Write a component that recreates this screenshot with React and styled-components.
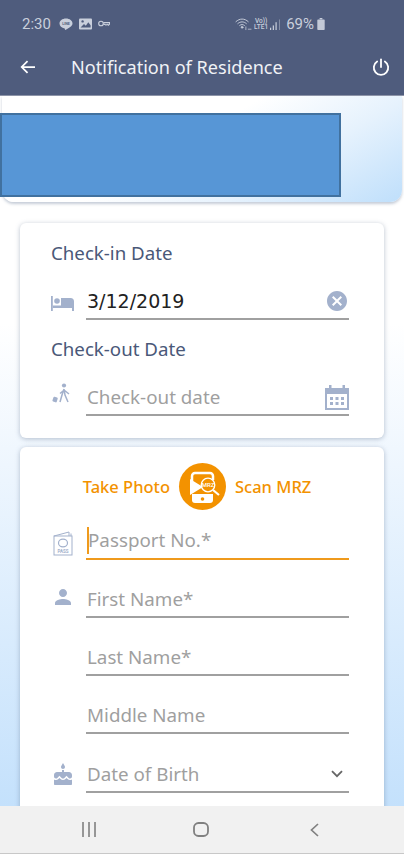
import React from "react";
import styled, { createGlobalStyle } from "styled-components";

const GlobalStyle = createGlobalStyle`
  html, body {
    margin: 0;
    padding: 0;
    background: #fff;
  }
  * {
    box-sizing: border-box;
  }
`;

const Phone = styled.div`
  width: 404px;
  height: 854px;
  display: flex;
  flex-direction: column;
  overflow: hidden;
  font-family: "Noto Sans", sans-serif;
  background: #fff;
`;

const Header = styled.header`
  flex: none;
  height: 96px;
  background: #4f5c7d;
  display: flex;
  flex-direction: column;
  border-bottom: 1px solid #8d94a8;
`;

const StatusBar = styled.div`
  height: 49px;
  display: flex;
  align-items: center;
  padding: 0 79px 1px 22px;
  color: #c9cfdc;
`;

const StatusTime = styled.span`
  font-family: Roboto, sans-serif;
  font-size: 15px;
  margin-right: 8px;
`;

const StatusIcons = styled.div`
  display: flex;
  align-items: center;
  gap: 6px;
`;

const StatusRight = styled.div`
  margin-left: auto;
  display: flex;
  align-items: center;
  gap: 2px;
`;

const Percent = styled.span`
  font-family: Roboto, sans-serif;
  font-size: 15px;
  margin: 0 1px 0 3px;
`;

const VoLte = styled.span`
  display: flex;
  flex-direction: column;
  align-items: center;
  font-family: Roboto, sans-serif;
  font-size: 6.5px;
  line-height: 6.5px;
  font-weight: 500;
`;

const Toolbar = styled.div`
  flex: 1;
  display: flex;
  align-items: center;
  padding: 0 14px 11px 20px;
  color: #fff;
`;

const Title = styled.h1`
  margin: 0 0 0 35px;
  font-size: 18.1px;
  font-weight: 400;
  color: #f0f2f6;
  flex: 1;
`;

const Content = styled.main`
  flex: 1;
  min-height: 0;
  overflow: hidden;
  background: linear-gradient(180deg, #fff 0%, #fff 32%, #eef6fe 52%, #c4e1fc 100%);
  display: flex;
  flex-direction: column;
`;

const Banner = styled.div`
  flex: none;
  position: relative;
  height: 106px;
  margin: 0 2px;
  border-radius: 0 0 12px 12px;
  background: linear-gradient(150deg, #fff 45%, #e6f2fd 70%, #bfdffb 100%);
  box-shadow: 0 2px 3px rgba(90, 110, 140, 0.35);
`;

const Redaction = styled.div`
  position: absolute;
  left: -2px;
  top: 17px;
  width: 341px;
  height: 84px;
  background: #5796d6;
  border: 2px solid #41719f;
`;

const Card = styled.section`
  flex: none;
  margin: ${(p) => p.$top}px 20px 0;
  width: 364px;
  padding: 0 35px 0 31px;
  background: #fff;
  border-radius: 6px;
  box-shadow: 0 1px 5px rgba(80, 100, 130, 0.4);
`;

const DatesCard = styled(Card)`
  height: 215px;
  padding-top: 17px;
`;

const PersonCard = styled(Card)`
  height: 420px;
  padding-top: 16px;
`;

const Label = styled.div`
  height: 26px;
  line-height: 26px;
  font-size: 18.7px;
  color: #4a5878;
`;

const Field = styled.div`
  display: flex;
  align-items: center;
  margin-top: ${(p) => p.$top || 0}px;
  height: ${(p) => p.$height || 38}px;
  & + ${Label} {
    margin-top: 16px;
  }
`;

const IconSlot = styled.div`
  flex: none;
  width: 35px;
  height: 100%;
  display: flex;
  align-items: center;
  color: #a3b1cc;
  padding-top: ${(p) => Math.max(p.$shift || 0, 0) * 2}px;
  padding-bottom: ${(p) => Math.max(-(p.$shift || 0), 0) * 2}px;
`;

const InputLine = styled.div`
  flex: 1;
  height: 100%;
  display: flex;
  align-items: center;
  justify-content: space-between;
  padding: 2px 0 0 1px;
  border-bottom: ${(p) => (p.$focused ? "2px solid #ef9a1c" : "2px solid #a0a0a0")};
  font-size: ${(p) => (p.$filled ? 19 : 18.8)}px;
  color: ${(p) => (p.$filled ? "#222" : "#9f9f9f")};
  font-family: ${(p) => (p.$filled ? '"DejaVu Sans", sans-serif' : '"Noto Sans", sans-serif')};
`;

const Caret = styled.span`
  width: 2px;
  height: 27px;
  background: #ef9a1c;
  margin-right: -1px;
  flex: none;
`;

const InputText = styled.span`
  flex: 1;
  white-space: nowrap;
`;

const ScanRow = styled.div`
  height: 47px;
  display: flex;
  align-items: center;
  justify-content: center;
  gap: 9px;
  margin: 0 1px 0 -5px;
  color: #f39200;
  font-size: 16.5px;
  font-weight: 500;
`;

const ScanButton = styled.div`
  width: 47px;
  height: 47px;
  border-radius: 50%;
  background: #f39200;
  flex: none;
`;

const NavBar = styled.nav`
  flex: none;
  height: 48px;
  background: #f1f1f1;
  border-bottom: 1px solid #c8c8c8;
  display: grid;
  grid-template-columns: 177px 48px 179px;
  align-items: center;
  justify-items: center;
  color: #808080;
`;

const NavSlot = styled.div`
  display: flex;
`;

const LineIcon = () => (
  <svg width="14" height="13" viewBox="0 0 14 13">
    <path fill="currentColor" d="M7 .5C3.3.5.5 2.700.5 5.500c0 2.500 2.200 4.400 5.100 4.900.6.1.3 1.100.3 1.600 0 .5 3.200-1.400 5.300-3 1.500-1.100 2.300-2.200 2.300-3.500C13.500 2.700 10.700.5 7 .5z" />
    <text x="7" y="7" textAnchor="middle" fontSize="3.600" fontWeight="700" fill="#4f5c7d" fontFamily="Roboto, sans-serif">LINE</text>
  </svg>
);

const PictureIcon = () => (
  <svg width="13" height="12" viewBox="0 0 13 12">
    <rect width="13" height="11" y="0.5" rx="1" fill="currentColor" />
    <circle cx="3.600" cy="3.400" r="1.200" fill="#4f5c7d" />
    <path d="M1.500 9.500 5 6l1.800 1.700L9.300 4.200l2.300 3v2.300z" fill="#4f5c7d" />
  </svg>
);

const KeyIcon = () => (
  <svg width="12" height="8" viewBox="0 0 12 8" fill="none" stroke="currentColor" strokeWidth="1.100">
    <circle cx="3" cy="3.500" r="2.300" />
    <path d="M5.400 2.600H11.500V4.300L10.300 5.200 9.200 4.400 8 5.200 6.800 4.400H5.400" />
  </svg>
);

const WifiIcon = () => (
  <svg width="17" height="14" viewBox="0 0 18 14" fill="none" stroke="currentColor" strokeWidth="1" strokeLinecap="round">
    <path d="M1 4.500C5 .8 10 .8 14 4.500" />
    <path d="M3 6.500c2.800-2.400 6.200-2.400 9 0" />
    <path d="M5 8.500c1.600-1.300 3.400-1.300 5 0" />
    <circle cx="7.500" cy="10.500" r=".9" fill="currentColor" />
    <path d="M11.500 10v3M14 12.500h3" strokeWidth=".8" />
  </svg>
);

const SignalIcon = () => (
  <svg width="11" height="13" viewBox="0 0 12 13" fill="currentColor">
    <rect x="0" y="10" width="1.300" height="2.500" />
    <rect x="3" y="7.500" width="1.300" height="5" />
    <rect x="6" y="4" width="1.300" height="8.500" />
    <rect x="10" y="1" width="0.800" height="11.500" opacity=".6" />
  </svg>
);

const BatteryIcon = () => (
  <svg width="8" height="12" viewBox="0 0 8 13" fill="currentColor">
    <rect x="2.500" y="0" width="3" height="1.500" />
    <rect x="0" y="1.500" width="8" height="11.500" rx=".8" opacity=".95" />
  </svg>
);

const BackArrow = () => (
  <svg width="16" height="14" viewBox="0 0 18 16" fill="none" stroke="currentColor" strokeWidth="2">
    <path d="M17 8H2M8.500 1.300 1.800 8l6.700 6.700" />
  </svg>
);

const PowerIcon = () => (
  <svg width="18" height="18" viewBox="0 0 20 20" fill="none" stroke="currentColor" strokeWidth="2" strokeLinecap="round">
    <path d="M10 1.500v8.500" />
    <path d="M5.700 3.900a8 8 0 1 0 8.600 0" />
  </svg>
);

const BedIcon = () => (
  <svg width="23" height="15" viewBox="0 0 23 15" fill="currentColor">
    <rect x="0" y="0" width="1.800" height="15" />
    <circle cx="6" cy="5" r="2.800" />
    <path d="M10 2h9.500a3.500 3.500 0 0 1 3.500 3.500V15h-2v-3H1.800V9.500H10z" />
  </svg>
);

const WalkerIcon = () => (
  <svg width="22" height="22" viewBox="-3 0 22 22" fill="none" stroke="currentColor" strokeWidth="1.500">
    <circle cx="10" cy="2.500" r="2.100" fill="currentColor" stroke="none" />
    <path d="M10 6l-2 6-2 7M10 6l1 6 3 7M10 7l5 4M9 8 6 10.500" />
    <rect x="-1" y="14" width="4.500" height="5" rx="1" transform="rotate(18 1 16)" fill="currentColor" stroke="none" />
  </svg>
);

const CalendarIcon = () => (
  <svg width="24" height="25" viewBox="0 0 24 25" fill="#a3b1cc">
    <rect x="4" y="0" width="2.500" height="5" />
    <rect x="17.500" y="0" width="2.500" height="5" />
    <path fillRule="evenodd" d="M0 3h24v22H0zM2 9v14h20V9z" />
    <g>
      <rect x="5" y="12" width="3" height="3" />
      <rect x="10.500" y="12" width="3" height="3" />
      <rect x="16" y="12" width="3" height="3" />
      <rect x="5" y="17" width="3" height="3" />
      <rect x="10.500" y="17" width="3" height="3" />
      <rect x="16" y="17" width="3" height="3" />
    </g>
  </svg>
);

const ClearIcon = () => (
  <svg width="24" height="20" viewBox="0 2 22 20" fill="#a3b1cc" preserveAspectRatio="xMinYMid meet">
    <path d="M12 2C6.470 2 2 6.470 2 12s4.470 10 10 10 10-4.470 10-10S17.530 2 12 2zm5 13.590L15.590 17 12 13.410 8.410 17 7 15.590 10.590 12 7 8.410 8.410 7 12 10.590 15.590 7 17 8.410 13.410 12 17 15.590z" />
  </svg>
);

const PassportIcon = () => (
  <svg width="23" height="25" viewBox="-2 0 23 25" fill="none" stroke="currentColor" strokeWidth="1">
    <path d="M1 5 16 1v4" />
    <path d="M18 2.500V5" />
    <rect x="1" y="5" width="18" height="19" />
    <ellipse cx="10" cy="12" rx="4.500" ry="3.800" strokeWidth="1.200" />
    <text x="10" y="21.500" textAnchor="middle" fontSize="4.500" fontWeight="700" stroke="none" fill="currentColor" fontFamily="Roboto, sans-serif">PASS</text>
  </svg>
);

const PersonIcon = () => (
  <svg width="24" height="24" viewBox="0 0 24 24" fill="currentColor">
    <path d="M12 12c2.210 0 4-1.790 4-4s-1.790-4-4-4-4 1.790-4 4 1.790 4 4 4zm0 2c-2.670 0-8 1.340-8 4v2h16v-2c0-2.660-5.330-4-8-4z" />
  </svg>
);

const CakeIcon = () => (
  <svg width="22" height="23" viewBox="0 0 22 23" fill="currentColor">
    <path d="M12 6c1.110 0 2-.9 2-2 0-.38-.1-.73-.29-1.030L12 0l-1.710 2.970c-.19.3-.29.65-.29 1.030 0 1.100.9 2 2 2zm4.600 9.990l-1.070-1.070-1.080 1.070c-1.300 1.300-3.580 1.310-4.890 0l-1.070-1.070-1.090 1.070C6.750 16.640 5.880 17 4.960 17c-.73 0-1.400-.23-1.960-.61V21c0 .55.45 1 1 1h16c.55 0 1-.45 1-1v-4.610c-.56.38-1.230.61-1.960.61-.92 0-1.790-.36-2.440-1.010zM18 9h-5V7h-2v2H6c-1.660 0-3 1.340-3 3v1.540c0 1.080.88 1.960 1.960 1.960.52 0 1.020-.2 1.380-.57l2.140-2.130 2.130 2.130c.74.74 2.030.74 2.770 0l2.140-2.130 2.130 2.130c.37.37.86.57 1.380.57 1.080 0 1.960-.88 1.960-1.960V12C21 10.340 19.660 9 18 9z" />
  </svg>
);

const ChevronDown = () => (
  <svg width="18" height="8" viewBox="0 0 18 8" fill="none" stroke="#666" strokeWidth="1.800">
    <path d="M1 1.200 6 6.200l5-5" />
  </svg>
);

const ScanIcon = () => (
  <ScanButton>
    <svg width="47" height="47" viewBox="0 0 47 47">
      <path d="M13 18v-5a3 3 0 0 1 3-3h15a3 3 0 0 1 3 3v4" fill="none" stroke="#fff" strokeWidth="2.500" />
      <path d="M11 16 l13 8 -13 8z" fill="#fff" />
      <path d="M13 31h21v6a3 3 0 0 1-3 3H16a3 3 0 0 1-3-3z" fill="#fff" />
      <circle cx="23.500" cy="36" r="1.800" fill="#f39200" />
      <circle cx="29" cy="22" r="6.800" fill="#f39200" stroke="#fff" strokeWidth="1.300" />
      <path d="M34 27l6 5" stroke="#fff" strokeWidth="2.200" />
      <text x="29" y="24" textAnchor="middle" fontSize="6" fill="#fff" fontFamily="Roboto, sans-serif">MRZ</text>
    </svg>
  </ScanButton>
);

const dateFields = [
  { label: "Check-in Date", icon: <BedIcon />, shift: 2, value: "3/12/2019", end: <ClearIcon />, filled: true },
  { label: "Check-out Date", icon: <WalkerIcon />, shift: -3, value: "Check-out date", end: <CalendarIcon /> },
];

const personFields = [
  { icon: <PassportIcon />, shift: 3, value: "Passport No.*", focused: true, top: 10, height: 40 },
  { icon: <PersonIcon />, shift: -2, value: "First Name*", top: 19.7 },
  { value: "Last Name*", top: 20.3 },
  { value: "Middle Name", top: 20.3 },
  { icon: <CakeIcon />, shift: 1, value: "Date of Birth", end: <ChevronDown />, top: 20.3 },
];

export default function App() {
  return (
    <>
      <GlobalStyle />
      <Phone>
        <Header>
          <StatusBar>
            <StatusTime>2:30</StatusTime>
            <StatusIcons>
              <LineIcon />
              <PictureIcon />
              <KeyIcon />
            </StatusIcons>
            <StatusRight>
              <WifiIcon />
              <VoLte>
                <span>Vo))</span>
                <span>LTE1</span>
              </VoLte>
              <SignalIcon />
              <Percent>69%</Percent>
              <BatteryIcon />
            </StatusRight>
          </StatusBar>
          <Toolbar>
            <BackArrow />
            <Title>Notification of Residence</Title>
            <PowerIcon />
          </Toolbar>
        </Header>
        <Content>
          <Banner>
            <Redaction />
          </Banner>
          <DatesCard $top={21}>
            {dateFields.map((f) => (
              <React.Fragment key={f.label}>
                <Label>{f.label}</Label>
                <Field $top={16}>
                  <IconSlot $shift={f.shift}>{f.icon}</IconSlot>
                  <InputLine $filled={f.filled}>
                    <InputText>{f.value}</InputText>
                    {f.end}
                  </InputLine>
                </Field>
              </React.Fragment>
            ))}
          </DatesCard>
          <PersonCard $top={9}>
            <ScanRow>
              <span>Take Photo</span>
              <ScanIcon />
              <span>Scan MRZ</span>
            </ScanRow>
            {personFields.map((f) => (
              <Field key={f.value} $top={f.top} $height={f.height}>
                <IconSlot $shift={f.shift}>{f.icon}</IconSlot>
                <InputLine $focused={f.focused}>
                  {f.focused && <Caret />}
                  <InputText>{f.value}</InputText>
                  {f.end}
                </InputLine>
              </Field>
            ))}
          </PersonCard>
        </Content>
        <NavBar>
          <NavSlot>
            <svg width="16" height="15" viewBox="0 0 16 15" stroke="currentColor" strokeWidth="1.600">
              <path d="M2 0v15M8 0v15M14 0v15" />
            </svg>
          </NavSlot>
          <NavSlot>
            <svg width="16" height="15" viewBox="0 0 16 15" fill="none" stroke="currentColor" strokeWidth="1.800">
              <rect x="1" y="1" width="14" height="13" rx="4.500" />
            </svg>
          </NavSlot>
          <NavSlot>
            <svg width="9" height="14" viewBox="0 0 9 14" fill="none" stroke="currentColor" strokeWidth="1.700">
              <path d="M8 1 1.500 7 8 13" />
            </svg>
          </NavSlot>
        </NavBar>
      </Phone>
    </>
  );
}
